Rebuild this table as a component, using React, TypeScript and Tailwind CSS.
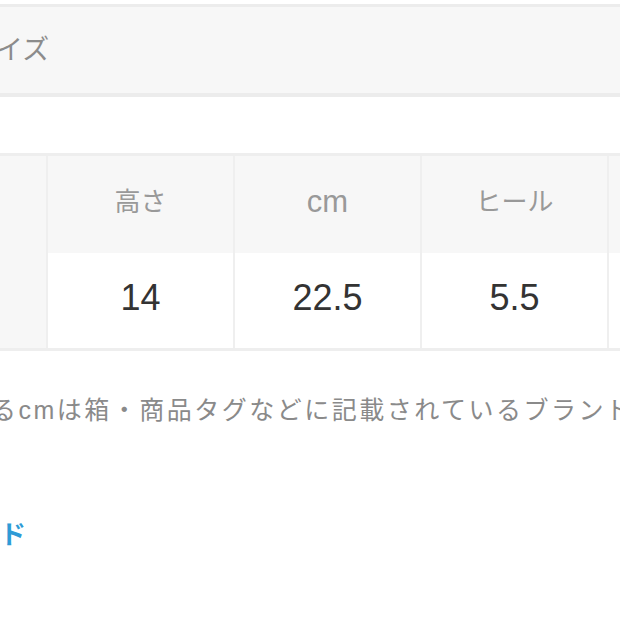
export default function App() {
    const headers = ["高さ", "cm", "ヒール"];
    const values = ["14", "22.5", "5.5"];

    return (
        <div
            className="h-[620px] w-[620px] overflow-hidden bg-white"
            style={{ fontFamily: '"Liberation Sans", "Noto Sans CJK JP", sans-serif' }}
        >
            {/* section title */}
            <div className="pt-[4px]">
                <div className="flex h-[93px] items-center border-t-[3px] border-b-[4px] border-[#ececec] bg-[#f7f7f7]">
                    <span className="-ml-[31px] text-[27px] text-[#8c8c8c]">サイズ</span>
                </div>
            </div>

            {/* size table */}
            <div className="mt-[56px] border-y-[3px] border-[#eeeeee]">
                <div className="flex h-[97px] bg-[#f7f7f7]">
                    <div className="w-[48px] shrink-0 border-r-[2px] border-[#efefef]" />
                    {headers.map((h) => (
                        <div
                            key={h}
                            className="flex w-[187px] shrink-0 items-center justify-center border-r-[2px] border-[#efefef] pb-[5px] text-[26px] text-[#999999]"
                        >
                            <span className={h === "cm" ? "text-[31px]" : ""}>{h}</span>
                        </div>
                    ))}
                    <div className="flex-1" />
                </div>
                <div className="flex h-[95px]">
                    <div className="w-[48px] shrink-0 border-r-[2px] border-[#efefef] bg-[#f7f7f7]" />
                    {values.map((v) => (
                        <div
                            key={v}
                            className="flex w-[187px] shrink-0 items-center justify-center border-r-[2px] border-[#efefef] pb-[5px] text-[36px] text-[#333333]"
                        >
                            {v}
                        </div>
                    ))}
                    <div className="flex-1" />
                </div>
            </div>

            {/* note */}
            <p className="-ml-[9px] mt-[41px] whitespace-nowrap text-[25px] tracking-[2.5px] text-[#8a8a8a]">
                るcmは箱・商品タグなどに記載されているブランド
            </p>

            {/* link */}
            <p className="-ml-[52px] mt-[86px] whitespace-nowrap text-[26px] font-bold text-[#2e9bd6]">
                ガイド
            </p>
        </div>
    );
}
